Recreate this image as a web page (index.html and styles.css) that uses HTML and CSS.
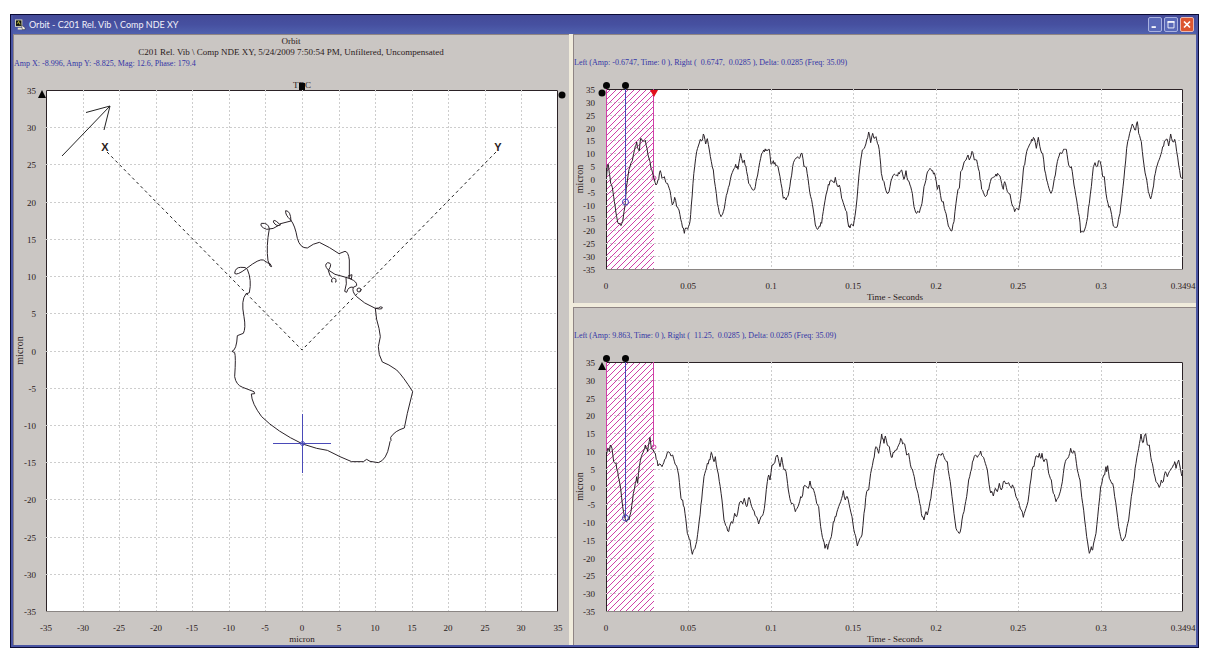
FILE: index.html
```html
<!DOCTYPE html>
<html lang="en">
<head>
<meta charset="utf-8">
<title>Orbit - C201 Rel. Vib \ Comp NDE XY</title>
<link rel="stylesheet" href="styles.css">
</head>
<body>
<main class="window">
  <header class="titlebar">
    <svg class="app-icon" viewBox="0 0 12 12" aria-hidden="true">
      <rect x="0" y="0" width="8" height="8" fill="#d9d8b8"/>
      <rect x="1" y="1" width="6" height="6" fill="#10130c"/>
      <path d="M2 4h1l1-2 1 3h1" stroke="#c8c840" fill="none"/>
      <path d="M3 9h5v2H3z" fill="#e8e4d0"/>
      <path d="M7 6l4 3v2H8z" fill="#f4f2e8" stroke="#222" stroke-width=".5"/>
    </svg>
    <h1 class="title">Orbit - C201 Rel. Vib \ Comp NDE XY</h1>
    <div class="controls">
      <button class="control" aria-label="Minimize"><svg viewBox="0 0 14 15"><path d="M3 10.500h5" stroke="#fff" stroke-width="2"/></svg></button>
      <button class="control" aria-label="Maximize"><svg viewBox="0 0 14 15"><path d="M3.500 4v7.500h7V4" stroke="#fff" fill="none"/><path d="M3 4.500h8" stroke="#fff" stroke-width="2"/></svg></button>
      <button class="control close" aria-label="Close"><svg viewBox="0 0 14 15"><path d="M3.500 4l7 7m0-7l-7 7" stroke="#fff" stroke-width="2"/></svg></button>
    </div>
  </header>
  <div class="panels">
    <section class="panel orbit">
      <div class="heading">
        <p class="center">Orbit</p>
        <p class="center">C201 Rel. Vib \ Comp NDE XY, 5/24/2009 7:50:54 PM, Unfiltered, Uncompensated</p>
        <p class="readout">Amp X: -8.996, Amp Y: -8.825, Mag: 12.6, Phase: 179.4</p>
      </div>
      <svg class="chart" id="orbit" viewBox="13 69 556 576" role="img" aria-label="Orbit plot"></svg>
    </section>
    <div class="waves">
      <section class="panel wave">
        <p class="readout">Left (Amp: -0.6747, Time: 0 ), Right (  0.6747,  0.0285 ), Delta: 0.0285 (Freq: 35.09)</p>
        <svg class="chart" id="wave-x" viewBox="573 69 623 234" role="img" aria-label="X waveform"></svg>
      </section>
      <section class="panel wave">
        <p class="readout">Left (Amp: 9.863, Time: 0 ), Right (  11.25,  0.0285 ), Delta: 0.0285 (Freq: 35.09)</p>
        <svg class="chart" id="wave-y" viewBox="573 342 623 303" role="img" aria-label="Y waveform"></svg>
      </section>
    </div>
  </div>
</main>
<script src="charts.js"></script>
</body>
</html>
```
FILE: styles.css
```css
* { box-sizing: border-box; }
body {
  margin: 0;
  padding: 14px 8px 6px 10px;
  background: #fff;
  font-family: "Liberation Serif", serif;
  font-size: 9px;
  line-height: 11px;
  color: #2a2020;
}
h1, p { margin: 0; font: inherit; }
.window {
  border: 1px solid #0b0b35;
  background: #4a55a3;
  padding: 0 2px 2px;
}
.titlebar {
  display: flex;
  align-items: center;
  gap: 3px;
  height: 19px;
  padding: 0 2px;
  background: linear-gradient(#444b98, #4650a0 50%, #5061ae);
}
.app-icon { width: 11px; height: 12px; }
.title {
  flex: 1;
  font-family: Lato, sans-serif;
  font-size: 9px;
  color: #f2f1fa;
  white-space: nowrap;
}
.controls { display: flex; gap: 2px; }
.control {
  width: 14px;
  height: 15px;
  padding: 0;
  border: 1px solid #a9b2e0;
  border-radius: 2px;
  background: #5a69b8;
}
.control svg { display: block; width: 12px; height: 13px; }
.close { background: #dc5630; border-color: #e8b8b0; }
.panels {
  display: grid;
  grid-template-columns: 556fr 623fr;
  gap: 4px;
  background: #f1ecdc;
}
.waves { display: grid; gap: 4px; align-content: start; }
.panel {
  min-width: 0;
  background: #cac6c3;
  box-shadow: inset 1px 1px #8f8584;
}
.heading { padding: 2px 0 0; }
.center { text-align: center; }
.readout { padding-left: 1px; font-size: 8px; color: #3335a6; white-space: pre; }
.wave .readout { padding-top: 23px; padding-bottom: 1px; }
.chart { display: block; width: 100%; height: auto; overflow: visible; }
.chart text { font-size: 9px; fill: #2a2020; }
.chart .end { text-anchor: end; }
.chart .mid { text-anchor: middle; }
.chart .unit { font-size: 10px; }
.chart .axis-name { font-family: "Liberation Sans", sans-serif; font-weight: bold; font-size: 11px; }
.plot { fill: #fff; }
.frame { fill: none; stroke: #2b2226; }
.base { fill: none; stroke: #8a8583; }
.grid { fill: none; stroke: #cdcdcd; stroke-dasharray: 2 2; }
.trace { fill: none; stroke: #2a2228; stroke-width: 3; stroke-linejoin: round; }
.line { fill: none; stroke: #222; }
.dashed { fill: none; stroke: #222; stroke-dasharray: 3 3; }
.solid { fill: #050505; }
.cursor { fill: none; stroke: #4a4ab8; }
.range { fill: none; stroke: #d040a8; }
.hatch { stroke: #d040a8; fill: none; }
.alert { fill: #e0101c; }
```
FILE: charts.js
```js
const times = ['0', '0.05', '0.1', '0.15', '0.2', '0.25', '0.3', '0.3494'];
const levels = Array.from({ length: 15 }, (_, i) => String(35 - i * 5));

function axes(o) {
  const stepX = (o.right - o.left) / (o.labels.length - 1);
  const stepY = (o.bottom - o.top) / 14;
  let grid = '', text = '';
  levels.forEach((label, i) => {
    const y = Math.round(o.top + i * stepY);
    if (i > 0 && i < 14) grid += `M${o.left} ${y + 0.5}H${o.right}`;
    text += `<text class="end" x="${o.labelX}" y="${y + 4}">${label}</text>`;
  });
  o.labels.forEach((label, i) => {
    const x = Math.round(o.left + i * stepX);
    if (i > 0 && i < o.labels.length - 1) grid += `M${x + 0.5} ${o.top}V${o.bottom}`;
    text += `<text class="mid" x="${x}" y="${o.bottom + 20}">${label}</text>`;
  });
  const midY = (o.top + o.bottom) / 2;
  text += `<text class="mid" x="${o.nameX}" y="${o.bottom + 31}">${o.name}</text>`;
  text += `<text class="mid unit" transform="translate(${o.unitX} ${midY}) rotate(-90)">micron</text>`;
  return `<rect class="plot" x="${o.left}" y="${o.top}" width="${o.right - o.left}" height="${o.bottom - o.top}"/>
    <path class="base" d="M${o.left} ${o.bottom + 0.5}H${o.right}"/>
    <path class="frame" d="M${o.left + 0.5} ${o.bottom}V${o.top + 0.5}H${o.right - 0.5}V${o.bottom}"/>
    <path class="grid" d="${grid}"/>${text}`;
}

// Sample the keyed curve finely and add the measurement ripple.
function ripple(data) {
  const pts = data.trim().split(/\s+/).map(p => p.split(',').map(Number));
  let out = `M${pts[0]}`, k = 0;
  for (let i = 1; i < pts.length; i++) {
    const [ax, ay] = pts[i - 1], [bx, by] = pts[i];
    const n = Math.max(1, Math.round((bx - ax) / 2.5));
    for (let j = 1; j < n; j++) {
      k++;
      const noise = ((k * 7919) % 13 - 6) * 0.9;
      out += `L${(ax + (bx - ax) * j / n).toFixed(1)} ${(ay + (by - ay) * j / n + noise).toFixed(1)}`;
    }
    out += `L${bx} ${by}`;
  }
  return out;
}

// Diagonal strokes across the selected time range.
function hatching(left, top, width, height) {
  let d = '';
  for (let s = 3; s < width + height; s += 6) {
    const x1 = Math.max(0, s - height), x2 = Math.min(width, s);
    d += `M${left + x1} ${top + s - x1}L${left + x2} ${top + s - x2}`;
  }
  return `<path class="hatch" d="${d}"/>`;
}

function wave(id, o) {
  document.getElementById(id).innerHTML = `
    ${axes({ left: 606, right: 1183, top: o.top, bottom: o.bottom, labels: times, labelX: 595, name: 'Time - Seconds', nameX: 895, unitX: 583 })}
    ${hatching(607, o.top + 1, 47, o.bottom - o.top - 1)}
    <path class="range" d="M606.500 ${o.top}V${o.left}M653.500 ${o.top}V${o.right}"/>
    <circle class="range" cx="654" cy="${o.right}" r="2"/>
    <g transform="translate(570 ${o.origin}) scale(.33333)"><path class="trace" d="${ripple(o.data)}"/></g>
    <path class="cursor" d="M625.500 ${o.top - 2}V${o.cursor}"/>
    <circle class="cursor" cx="625.5" cy="${o.cursor}" r="3"/>
    <circle class="solid" cx="606.5" cy="${o.top - 3.5}" r="3.5"/>
    <circle class="solid" cx="625.5" cy="${o.top - 3.5}" r="3.5"/>
    ${o.marks}`;
}

document.getElementById('orbit').innerHTML = `
  ${axes({ left: 46, right: 558, top: 90, bottom: 611, labels: levels.slice().reverse(), labelX: 36, name: 'micron', nameX: 302, unitX: 23 })}
  <text class="mid" x="302" y="88">TDC</text>
  <rect class="solid" x="299" y="83" width="6" height="7"/>
  <path class="solid" d="M42 90L46 98H38z"/><circle class="solid" cx="562" cy="95" r="3.5"/>
  <path class="line" d="M62 156L110 106M86 112.500L110 106L104 130"/>
  <path class="dashed" d="M107 152L302 350L496 152"/>
  <text class="axis-name mid" x="105" y="151">X</text><text class="axis-name mid" x="498" y="151">Y</text>
  <g transform="translate(220 190) scale(.33333)"><path class="trace" d="M248 762L290 775L322 781L360 800L395 815H430L440 808L450 814L475 818Q500 810 508 765L510 755L513 752L512 742Q525 722 553 714L562 670L578 605Q550 560 530 540Q505 522 487 516Q475 495 475 470L481 440L477 415Q468 390 466 355L476 354Q480 348 487 352Q488 358 478 357L466 355Q430 340 410 320Q395 305 400 292Q385 288 380 307L374 304Q382 280 378 262L345 253L325 240Q310 225 323 218Q340 218 325 242Q330 262 337 264M378 262L392 267Q412 275 410 287L400 292M384 258L396 254L394 268L384 260M388 262V210Q385 185 375 184L357 191Q330 172 298 157Q280 160 262 174Q240 175 232 145Q225 105 212 90Q195 75 197 62Q212 62 213 93L178 102Q160 84 160 96Q170 112 182 104L178 105Q160 119 140 118Q118 110 124 100Q145 98 148 116Q138 170 144 212L150 228L155 230Q152 218 142 218L130 210Q118 205 80 235Q50 258 44 250Q46 232 62 232Q78 230 82 238Q96 270 88 308L78 312Q62 330 72 380Q78 415 70 430L52 437Q50 480 36 484L44 488Q48 500 44 560Q48 585 68 592L102 605L104 611L94 612Q95 640 125 680Q170 725 248 762M335 276V268Q341 260 348 268V276H345M335 276H338"/><circle class="trace" cx="417" cy="300" r="6"/></g>
  <path class="cursor" d="M273 443.500H331M302.500 414V473"/><circle class="cursor" cx="302.5" cy="443.5" r="2"/>`;

wave('wave-x', {
  top: 89, bottom: 269, origin: 70, left: 168, right: 178, cursor: 202,
  marks: '<circle class="solid" cx="602" cy="93" r="3.5"/><path class="alert" d="M650 90H658L654 97z"/>',
  data: `110,318 112,285 115,283 118,310 122,340 127,352 131,380 135,405 140,440 146,462 153,467 158,455 162,425 166,398 169,350 174,318 180,290 187,272 191,250 196,228 200,216 205,238 208,243 212,205 217,213 222,214 226,211 231,235 237,265 243,295 250,318 258,345 264,330 271,302 276,325 283,320 290,340 300,362 307,405 314,382 320,410 327,420 335,458 343,490 347,474 353,478 360,455 364,405 369,340 374,290 380,245 385,228 391,208 396,212 400,192 407,222 412,206 418,240 424,275 430,300 436,350 442,400 448,430 453,440 460,425 466,395 472,368 478,345 484,315 490,300 497,283 504,298 512,250 518,278 523,270 530,305 536,340 542,350 549,360 556,350 563,315 569,278 575,250 581,240 588,243 593,242 598,238 603,283 610,272 617,287 624,290 630,320 636,355 640,385 648,390 655,375 662,330 668,290 675,268 683,260 690,262 696,250 702,290 709,292 714,325 722,380 730,420 736,465 742,478 748,468 755,460 762,410 768,375 775,343 785,332 793,338 796,322 802,348 808,345 815,385 822,405 830,425 836,470 840,474 844,462 850,468 858,415 864,350 870,290 877,240 883,235 890,210 896,186 902,218 908,190 912,205 918,200 925,225 930,262
  934,310 938,330 942,335 948,362 954,370 960,350 966,325 973,312 980,315 988,312 995,300 1002,328 1008,302 1014,332 1020,345 1027,370 1032,410 1040,430 1048,428 1056,400 1062,350 1070,315 1080,295 1088,302 1096,320 1102,358 1107,345 1114,390 1120,395 1126,425 1135,468 1146,482 1152,455 1158,400 1164,358 1168,355 1172,305 1180,285 1188,270 1194,255 1198,270 1206,244 1213,270 1220,270 1228,305 1235,358 1246,380 1256,360 1264,325 1270,322 1278,312 1290,318 1300,358 1304,335 1312,365 1320,372 1328,408 1334,425 1340,415 1346,420 1352,385 1360,300 1364,285 1370,245 1378,225 1385,208 1393,206 1399,235 1405,202 1412,240 1418,250 1424,300 1430,330 1437,355 1443,370 1450,345 1456,315 1462,275 1470,248 1478,245 1489,238 1496,285 1504,290 1512,345 1520,390 1528,440 1532,488 1542,485 1550,455 1558,400 1564,350 1570,290 1575,278 1580,290 1588,272 1593,285 1598,320 1603,320 1608,370 1614,400 1622,420 1630,468 1636,472 1643,465 1650,430 1657,370 1664,300 1670,235 1676,205 1682,180 1687,162 1697,180 1702,155 1706,190 1714,215 1720,270 1728,320 1735,365 1742,387 1748,360 1756,310 1762,285 1770,262 1778,230 1786,212 1792,208 1796,228 1802,192 1808,215 1814,208 1820,245 1826,285 1832,322 1838,326`
});

wave('wave-y', {
  top: 362, bottom: 611, origin: 320, left: 451, right: 447, cursor: 518,
  marks: '<path class="solid" d="M602 362L606 370H598z"/>',
  data: `110,402 113,385 118,395 121,375 126,385 131,425 138,428 145,470 152,505 158,560 164,590 170,605 177,600 183,575 190,520 196,490 200,470 203,490 208,440 214,410 222,390 226,375 233,395 240,352 244,385 250,390 256,400 264,438 270,432 276,440 284,418 290,405 297,396 303,408 308,405 318,435 326,465 333,535 338,540 345,580 352,640 360,660 367,703 375,685 380,665 388,600 395,540 402,470 412,430 420,420 424,397 432,425 436,410 442,450 448,485 456,540 462,600 470,620 476,635 484,605 488,610 494,580 500,590 506,560 513,543 518,552 523,535 530,560 537,532 545,560 552,572 558,590 566,612 573,590 580,580 586,540 592,485 596,465 600,480 606,435 612,430 622,405 630,440 635,412 643,450 648,455 655,510 662,545 668,550 676,575 684,560 692,530 698,525 702,498 710,500 715,505 720,483 726,505 734,520 740,550 746,560 752,620 760,660 765,685 770,672 773,688 778,665 784,650 790,605 798,590 806,560 812,545 820,512 826,540 832,530 840,565 846,590 854,640 862,678 870,655 876,645 882,580 890,515 896,510 902,460 910,420 918,380 926,400 935,342
  942,370 946,348 952,375 958,380 964,412 972,398 980,390 992,355 998,372 1004,372 1010,405 1016,400 1024,445 1030,460 1038,500 1044,520 1052,560 1056,590 1062,600 1068,575 1072,585 1080,545 1088,500 1094,450 1100,420 1106,402 1116,400 1125,418 1132,425 1138,470 1146,530 1152,580 1158,625 1164,635 1170,638 1176,600 1182,575 1190,530 1196,480 1202,455 1210,420 1216,405 1222,412 1232,393 1238,410 1246,430 1252,450 1260,510 1270,528 1276,505 1282,515 1288,490 1294,510 1300,485 1308,492 1316,488 1322,500 1330,500 1338,530 1346,545 1354,570 1360,592 1368,565 1374,545 1380,495 1386,450 1392,440 1398,408 1405,412 1408,400 1412,415 1416,400 1422,425 1430,418 1436,460 1444,480 1450,520 1458,545 1466,530 1474,500 1480,460 1486,425 1496,410 1502,385 1508,400 1514,395 1522,450 1530,480 1538,550 1544,600 1550,650 1558,700 1564,680 1568,690 1578,640 1586,560 1592,500 1598,475 1604,465 1608,440 1610,455 1613,437 1618,475 1628,490 1634,530 1640,570 1646,620 1652,650 1656,662 1662,655 1668,640 1676,600 1684,530 1690,490 1698,430 1706,385 1713,342 1718,368 1727,341 1732,375 1738,375 1745,425 1752,460 1758,485 1764,492 1768,502 1774,480 1780,485 1786,455 1792,470 1798,455 1804,445 1810,435 1814,425 1818,445 1826,420 1832,450 1836,468 1838,455`
});
```
